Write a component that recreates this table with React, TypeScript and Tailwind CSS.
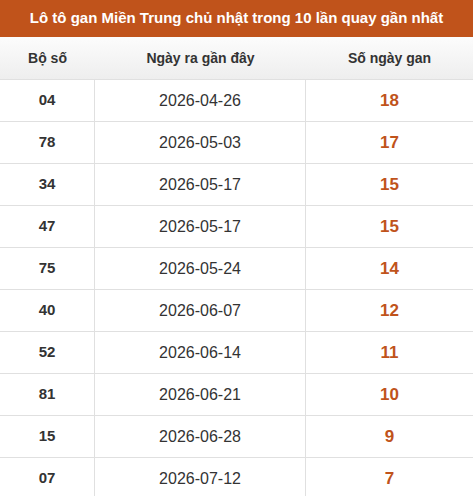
import React from "react";

const rows: [string, string, string][] = [
  ["04", "2026-04-26", "18"],
  ["78", "2026-05-03", "17"],
  ["34", "2026-05-17", "15"],
  ["47", "2026-05-17", "15"],
  ["75", "2026-05-24", "14"],
  ["40", "2026-06-07", "12"],
  ["52", "2026-06-14", "11"],
  ["81", "2026-06-21", "10"],
  ["15", "2026-06-28", "9"],
  ["07", "2026-07-12", "7"],
];

export default function App() {
  return (
    <div className="w-[473px] bg-white" style={{ fontFamily: '"Liberation Sans", Arial, sans-serif' }}>
      <div className="h-[37px] bg-[#c0531b] flex items-center justify-center text-white font-bold text-[15px]">
        Lô tô gan Miền Trung chủ nhật trong 10 lần quay gần nhất
      </div>
      <div className="grid grid-cols-[95px_211px_1fr] h-[43px] bg-gradient-to-b from-[#fcfcfc] to-[#eeeeee] border-b border-[#e0e0e0] text-[14px] font-bold text-[#333]">
        <div className="flex items-center justify-center">Bộ số</div>
        <div className="flex items-center justify-center">Ngày ra gần đây</div>
        <div className="flex items-center justify-center">Số ngày gan</div>
      </div>
      {rows.map(([a, b, c], i) => (
        <div key={i} className="grid grid-cols-[95px_211px_1fr] h-[42px] border-b border-[#e0e0e0] text-[#333]">
          <div className="flex items-center justify-center border-r border-[#e0e0e0] font-bold text-[15px]">{a}</div>
          <div className="flex items-center justify-center border-r border-[#e0e0e0] text-[16px]">{b}</div>
          <div className="flex items-center justify-center font-bold text-[17px] text-[#c0531b]">{c}</div>
        </div>
      ))}
    </div>
  );
}
